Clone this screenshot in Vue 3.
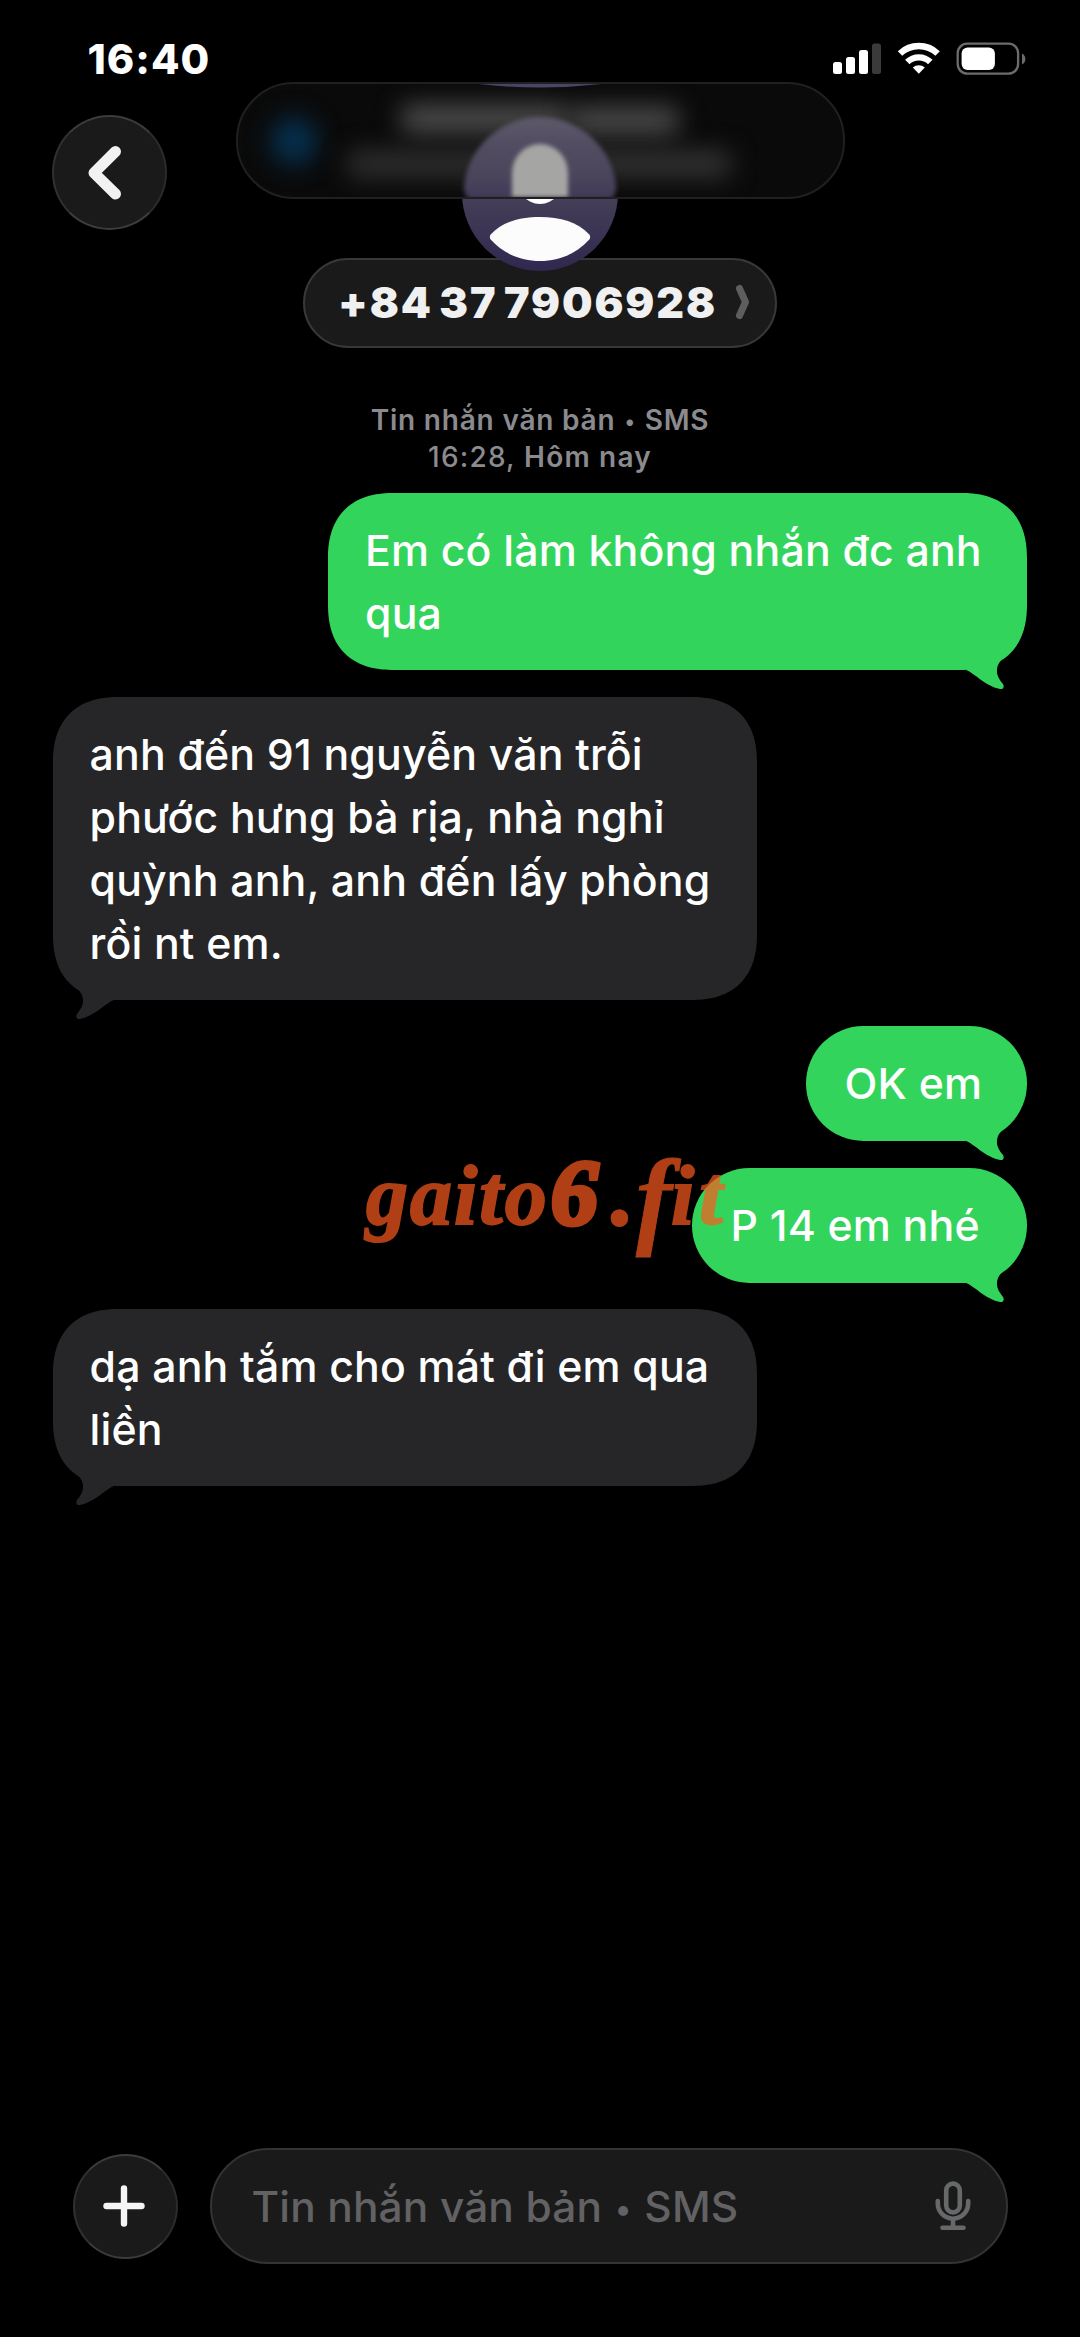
<script setup>
const messages = [
  { id: 1, side: 'sent', size: 'wide', text: 'Em có làm không nhắn đc anh\nqua' },
  { id: 2, side: 'received', size: 'wide', text: 'anh đến 91 nguyễn văn trỗi\nphước hưng bà rịa, nhà nghỉ\nquỳnh anh, anh đến lấy phòng\nrồi nt em.' },
  { id: 3, side: 'sent', size: 'short', text: 'OK em' },
  { id: 4, side: 'sent', size: 'medium', text: 'P 14 em nhé' },
  { id: 5, side: 'received', size: 'wide', text: 'dạ anh tắm cho mát đi em qua\nliền' },
]
</script>

<template>
  <main class="screen">
    <header class="status">
      <span class="clock">16:40</span>
      <svg class="status-icons" width="194" height="34" viewBox="831 42 194 34">
        <g fill="#fff">
          <rect x="832" y="62" width="9" height="12" rx="2.5" />
          <rect x="845" y="57" width="9" height="17" rx="2.5" />
          <rect x="858" y="50" width="9" height="24" rx="2.5" />
          <rect x="871" y="43.5" width="9" height="30.5" rx="2.5" fill="#3a3a3a" />
        </g>
        <g fill="none" stroke="#fff" stroke-width="6.4">
          <path d="M899 53.5a27.5 27.5 0 0 1 37.6 0" />
          <path d="M906.3 62a16.5 16.5 0 0 1 23 0" />
        </g>
        <path d="M911.8 67.6a9 9 0 0 1 12 0l-6 6.2z" fill="#fff" />
        <rect x="956.7" y="43.6" width="60.4" height="30" rx="9.5" fill="none" stroke="#6c6c6c" stroke-width="2.3" />
        <rect x="960.6" y="47.6" width="33.3" height="22.3" rx="6" fill="#fff" />
        <path d="M1021 53.5q3.4 2 3.4 5.5t-3.4 5.5z" fill="#6c6c6c" />
      </svg>
    </header>

    <section class="top">
      <button class="round back" aria-label="Back">
        <svg width="40" height="60" viewBox="0 0 40 60">
          <path d="M28.5 8.5 7 29.8 28.5 51" fill="none" stroke="#f2f2f2" stroke-width="11" stroke-linecap="round" stroke-linejoin="round" />
        </svg>
      </button>
      <div class="contact">
        <svg class="avatar" width="156" height="156" viewBox="0 0 156 156">
          <defs>
            <linearGradient id="av" x1="0" y1="0" x2="0" y2="1">
              <stop offset="0" stop-color="#5d5870" />
              <stop offset=".5" stop-color="#464058" />
              <stop offset="1" stop-color="#30284f" />
            </linearGradient>
          </defs>
          <circle cx="78" cy="78" r="78" fill="url(#av)" />
          <ellipse cx="78" cy="60" rx="25" ry="29" fill="#fff" />
          <path d="M28.7 119.5C40 107 58 102 78 102s38 5 49.3 17.5q1.8 2.5 0 5C114 139 97 146 78 146s-36-7-49.3-21.5q-1.8-2.5 0-5z" fill="#fcfcfd" />
        </svg>
        <div class="number">
          <span>+84 37 7906928</span>
          <svg width="16" height="36" viewBox="0 0 16 36">
            <path d="M4.5 4.5 10.5 18 4.5 31.5" fill="none" stroke="#5e5e5e" stroke-width="7" stroke-linecap="round" stroke-linejoin="round" />
          </svg>
        </div>
      </div>
      <div class="banner">
        <i class="smudge dot"></i>
        <i class="smudge title"></i>
        <i class="smudge title-end"></i>
        <i class="smudge line"></i>
        <i class="smudge line-end"></i>
        <svg class="rim" width="140" height="5" viewBox="0 0 140 5"><path d="M0 0h140Q70 9 0 0z" fill="#4a4468" /></svg>
        <svg class="ghost" width="156" height="84" viewBox="0 0 156 84">
          <defs>
            <linearGradient id="gh" x1="0" y1="0" x2="0" y2="1">
              <stop offset="0" stop-color="#5e5a6b" />
              <stop offset=".35" stop-color="#514c60" />
              <stop offset=".65" stop-color="#4d475d" />
              <stop offset="1" stop-color="#413a58" />
            </linearGradient>
          </defs>
          <path d="M8 84Q1 80 2 70A76.5 76.5 0 0 1 154 70Q155 80 148 84z" fill="url(#gh)" />
          <path d="M50 82V58a28 29 0 0 1 56 0V82z" fill="#a5a5a4" />
        </svg>
      </div>
    </section>

    <div class="stamp">
      <div class="stamp-a">Tin nhắn văn bản <b>•</b> SMS</div>
      <div class="stamp-b"><span>16:28,</span> Hôm nay</div>
    </div>

    <section class="thread">
      <div v-for="m in messages" :key="m.id" class="bubble" :class="[m.side, m.size, 'm' + m.id]">
        {{ m.text }}
        <svg class="tail" width="70" height="60" viewBox="0 0 70 60">
          <path d="M9 40C16 42 28 56 43 59C46.5 59.5 47.5 57 46 54C42 49 39.5 45 40 39.5C40.5 33 45 29 51 23.5L20 20Z" />
        </svg>
      </div>
    </section>

    <div class="mark"><span class="w1">gaito</span><span class="w2">6</span><span class="w3">.</span><span class="w4">f</span><span class="w5">it</span></div>

    <footer class="composer">
      <button class="round plus" aria-label="Add">
        <svg width="42" height="42" viewBox="0 0 42 42">
          <path d="M21 3.5v35M3.5 21h35" stroke="#f5f5f5" stroke-width="6.4" stroke-linecap="round" />
        </svg>
      </button>
      <div class="field">
        <span>Tin nhắn văn bản <b>•</b> SMS</span>
        <svg width="36" height="50" viewBox="0 0 36 50" fill="none" stroke="#666869" stroke-width="4.6" stroke-linecap="round">
          <rect x="11.2" y="2.6" width="13.6" height="28.8" rx="6.8" />
          <path d="M2.8 20v2.5a15.2 15.2 0 0 0 30.4 0V20M18 39v7M7.5 46.8h21" />
        </svg>
      </div>
    </footer>
  </main>
</template>

<style>
html, body { background: #000; }
</style>

<style scoped>
.screen {
  position: relative;
  width: 1080px;
  height: 2337px;
  overflow: hidden;
  background: #000;
  display: flex;
  flex-direction: column;
  font-family: Inter, "Liberation Sans", sans-serif;
  color: #fff;
}
.status {
  height: 76px;
  padding: 34px 54px 0 87.5px;
  box-sizing: border-box;
  display: flex;
  justify-content: space-between;
}
.clock { font-size: 41.5px; line-height: 50px; font-weight: 800; letter-spacing: 1px; }
.status-icons { margin-top: 8px; }
.top {
  position: relative;
  height: 272px;
  display: flex;
  padding: 39px 0 0 52px;
  box-sizing: border-box;
}
.round {
  border-radius: 50%;
  border: 2px solid #2e2e2e;
  border-color: #3c3c3c #2b2b2b #3c3c3c #303030;
  background: #1a1a1a;
  box-sizing: border-box;
  padding: 0;
  display: flex;
  align-items: center;
  justify-content: center;
}
.back { width: 115px; height: 115px; }
.back svg { margin-left: -5px; }
.contact {
  margin-left: 136px;
  width: 474px;
  display: flex;
  flex-direction: column;
  align-items: center;
}
.avatar { position: relative; z-index: 1; flex: none; }
.number {
  margin-top: -13px;
  width: 474px;
  height: 90px;
  flex: none;
  box-sizing: border-box;
  border: 2px solid #383838;
  border-radius: 45px;
  background: #1a1a1a;
  display: flex;
  align-items: center;
  justify-content: space-between;
  padding: 0 24px 3px 33px;
  color: #f0f0f0;
  font-size: 43px;
  font-weight: 900;
  letter-spacing: 1.9px;
  word-spacing: -4px;
  white-space: nowrap;
}
.banner {
  position: absolute;
  z-index: 2;
  left: 236px;
  top: 6px;
  width: 609px;
  height: 117px;
  box-sizing: border-box;
  border: 2px solid #202020;
  border-radius: 58px;
  background: #0a0a0a;
  overflow: hidden;
}
.smudge { position: absolute; filter: blur(12px); border-radius: 12px; }
.dot { left: 33px; top: 33px; width: 46px; height: 48px; background: #06304f; border-radius: 50%; }
.title { left: 162px; top: 20px; width: 170px; height: 30px; background: #4a4a4a; }
.title-end { left: 330px; top: 22px; width: 112px; height: 30px; background: #484848; }
.line { left: 108px; top: 66px; width: 220px; height: 28px; background: #2e2e2e; }
.line-end { left: 330px; top: 66px; width: 164px; height: 28px; background: #323232; }
.rim { position: absolute; left: 232px; top: -1px; }
.ghost { position: absolute; left: 224px; top: 31px; filter: blur(2px); }
.stamp {
  margin-top: 54px;
  color: #8b8b8f;
  font-size: 28px;
  line-height: 37px;
  font-weight: 600;
  letter-spacing: .8px;
  text-align: center;
}
.stamp b, .field b {
  display: inline-block;
  font-size: .74em;
  line-height: 1;
  font-weight: 500;
  vertical-align: .05em;
  margin: 0 .04em;
}
.stamp-b { letter-spacing: 1.2px; }
.stamp-b span { font-weight: 500; }
.thread {
  display: flex;
  flex-direction: column;
  align-items: flex-start;
  margin: 16.7px 53px 0 52.5px;
}
.bubble {
  position: relative;
  box-sizing: border-box;
  padding: 27.2px 0 25px 37px;
  border-radius: 66px;
  corner-shape: superellipse(1.25);
  font-size: 42.8px;
  line-height: 62.7px;
  font-weight: 550;
  letter-spacing: .17px;
  white-space: pre-line;
}
.sent { align-self: flex-end; background: #33d45b; color: #fff; }
.sent .tail { fill: #33d45b; }
.sent.short, .sent.medium { padding-left: 38.5px; border-radius: 57.5px; corner-shape: round; }
.received { background: #262628; width: 704px; }
.received .tail { fill: #262628; }
.sent.wide { width: 699px; }
.sent.short { width: 221px; }
.sent.medium { width: 335px; }
.m2 { margin-top: 27px; }
.m3 { margin-top: 25.6px; }
.m4 { margin-top: 27px; }
.m5 { margin-top: 26px; }
.tail { position: absolute; right: 0; bottom: -20px; }
.received .tail { right: auto; left: 0; transform: scaleX(-1); }
.mark {
  position: absolute;
  z-index: 3;
  left: 366px;
  top: 1118px;
  height: 140px;
  display: flex;
  align-items: baseline;
  line-height: 140px;
  font-family: "Liberation Serif", serif;
  font-style: italic;
  font-weight: 700;
  font-size: 84px;
  color: #fb5b1f;
  -webkit-text-stroke: 2px #fb5b1f;
  opacity: .7;
}
.w1 { width: 185px; letter-spacing: 2px; }
.w2 { width: 61px; font-size: 94px; -webkit-text-stroke-width: 5px; }
.w3 { width: 24px; -webkit-text-stroke-width: 4px; }
.w4 { position: relative; top: 10px; width: 35px; font-size: 108px; -webkit-text-stroke-width: 1px; }
.w5 { letter-spacing: 5px; }
.composer {
  position: absolute;
  left: 72.5px;
  top: 2148px;
  width: 935px;
  height: 116px;
  display: flex;
  align-items: center;
  justify-content: space-between;
}
.plus { width: 105px; height: 105px; }
.plus svg { margin-left: -2px; }
.field {
  width: 798px;
  height: 116px;
  box-sizing: border-box;
  border: 2px solid #333;
  border-radius: 58px;
  background: #1a1a1a;
  display: flex;
  align-items: center;
  justify-content: space-between;
  padding: 0 35px 0 40px;
  font-size: 42.4px;
  font-weight: 550;
  letter-spacing: .15px;
  color: #626264;
}
</style>
